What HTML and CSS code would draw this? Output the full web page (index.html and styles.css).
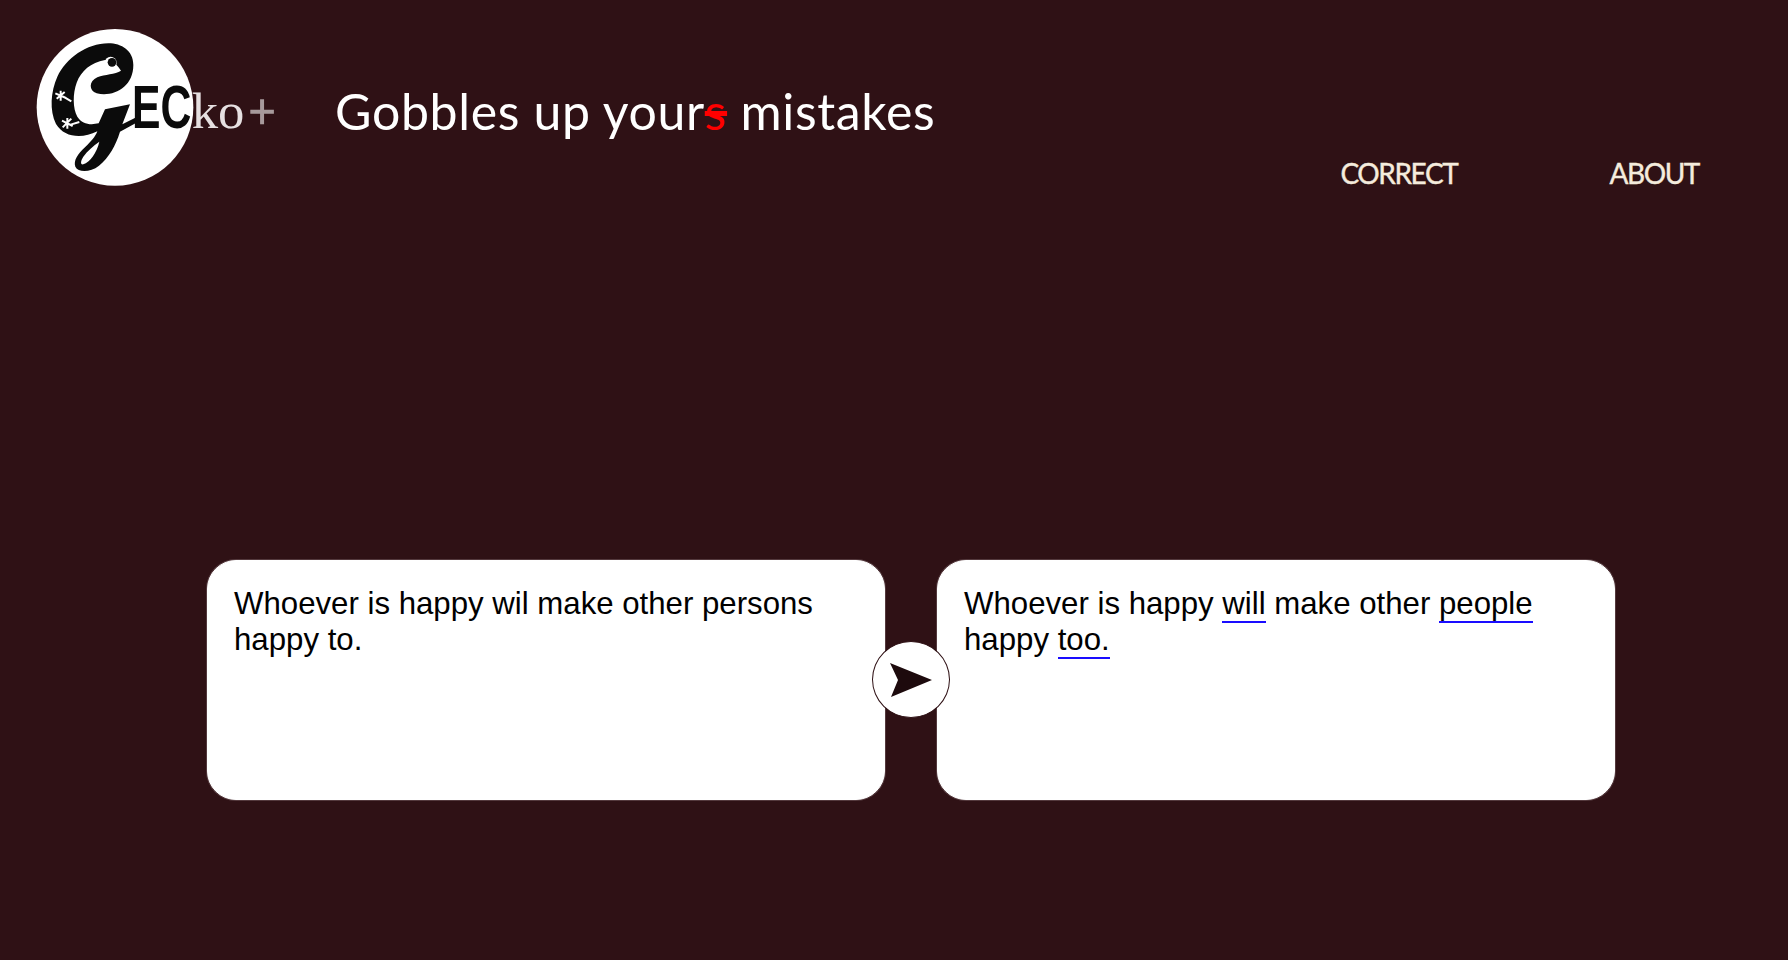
FILE: index.html
```html
<!DOCTYPE html>
<html lang="en">
<head>
<meta charset="utf-8">
<title>GECko+</title>
<link rel="stylesheet" href="styles.css">
</head>
<body>
<header class="header">
  <svg class="logo" viewBox="0 0 840 570" role="img" aria-label="GECko+">
    <circle cx="285" cy="292" r="235" fill="#fff"/>
    <g transform="translate(60 60)">
      <path fill="#0b0b0b" fill-rule="evenodd" d="M280 105C280 62 245 40 205 40C140 40 78 85 52 140C32 185 28 240 48 282C72 322 125 328 172 304C165 322 155 332 135 352C113 372 100 392 106 410C115 428 150 428 177 407C207 382 227 347 240 305L292 277L292 260L247 283L270 223L195 238L176 280C150 286 126 282 112 260C98 235 98 190 110 158C124 122 152 98 195 90C222 90 236 112 243 122C225 134 195 132 172 142C146 154 146 182 170 190C220 202 280 172 280 105ZM178 335C170 370 150 395 130 403C120 405 122 392 130 380C142 362 160 348 178 335Z"/>
      <circle cx="212" cy="98" r="18" fill="#fff"/>
      <circle cx="216" cy="97" r="13" fill="#0b0b0b"/>
      <g class="foot">
        <path d="M46 190L78 204M50 206L74 186M62 182L62 212M70 200L94 214"/>
        <path d="M66 272L98 288M68 292L94 266M82 264L82 296M92 284L118 276"/>
      </g>
    </g>
    <text class="logo-ec" x="336" y="354" textLength="178" lengthAdjust="spacingAndGlyphs">EC</text>
    <text class="logo-ko" x="515" y="355" textLength="158" lengthAdjust="spacingAndGlyphs">ko</text>
    <text class="logo-plus" x="686" y="356" textLength="80" lengthAdjust="spacingAndGlyphs">+</text>
  </svg>
  <div class="tagline">Gobbles up your<span class="strike">s</span> mistakes</div>
  <nav class="nav">
    <a class="nav-link">CORRECT</a>
    <a class="nav-link">ABOUT</a>
  </nav>
</header>
<main class="main">
  <div class="panel">Whoever is happy wil make other persons happy to.</div>
  <div class="panel">Whoever is happy <span class="fix">will</span> make other <span class="fix">people</span> happy <span class="fix">too.</span></div>
  <button class="go" aria-label="Correct">
    <svg class="go-icon" viewBox="0 0 44 36"><path d="M1 1L43 18L2 35L9 18Z"/></svg>
  </button>
</main>
</body>
</html>
```

FILE: styles.css
```css
* { box-sizing: border-box; }
html, body { height: 100%; }
body {
  margin: 0;
  background: #2f1115;
  overflow: hidden;
  font-family: "Liberation Sans", Arial, sans-serif;
}
.header {
  position: relative;
  height: 560px;
  padding: 10px 89px 0 20px;
  display: flex;
  align-items: flex-start;
}
.logo { width: 280px; height: 190px; flex: none; }
.foot path { fill: none; stroke: #fff; stroke-width: 6; }
.logo-ec { font: bold 184px "Liberation Sans", sans-serif; fill: #0b0b0b; }
.logo-ko { font: 150px "Liberation Serif", serif; fill: #e6e0e1; }
.logo-plus { font: 150px "Liberation Serif", serif; fill: #a89a9c; stroke: #a89a9c; stroke-width: 5px; }
.tagline {
  margin: 66px 0 0 35px;
  font: 50px/70px "Lato", sans-serif;
  letter-spacing: 0.65px;
  color: #fff;
  white-space: nowrap;
}
.strike { color: #f00; text-decoration: line-through; }
.nav {
  margin: 145px 0 0 auto;
  display: flex;
  gap: 152px;
}
.nav-link {
  font: 28px/36px "Lato", sans-serif;
  color: #f5ecdd;
  letter-spacing: -1.4px;
  -webkit-text-stroke: 0.4px #f5ecdd;
}
.main {
  position: relative;
  margin-left: 207px;
  width: 1408px;
  display: flex;
  gap: 52px;
}
.panel {
  width: 678px;
  height: 240px;
  background: #fff;
  border: 1px solid #fff;
  box-shadow: 0 0 0 1px #54393d;
  border-radius: 29px;
  padding: 25px 26px;
  font-size: 31.2px;
  line-height: 36px;
  color: #000;
}
.fix { border-bottom: 2px solid #1a0dff; }
.go {
  position: absolute;
  left: 665px;
  top: 81px;
  width: 78px;
  height: 77px;
  padding: 0;
  border: 1px solid #2f1115;
  border-radius: 50%;
  background: #fff;
  display: flex;
  align-items: center;
  justify-content: center;
}
.go-icon { width: 44px; height: 36px; fill: #1d0a0d; }
```
